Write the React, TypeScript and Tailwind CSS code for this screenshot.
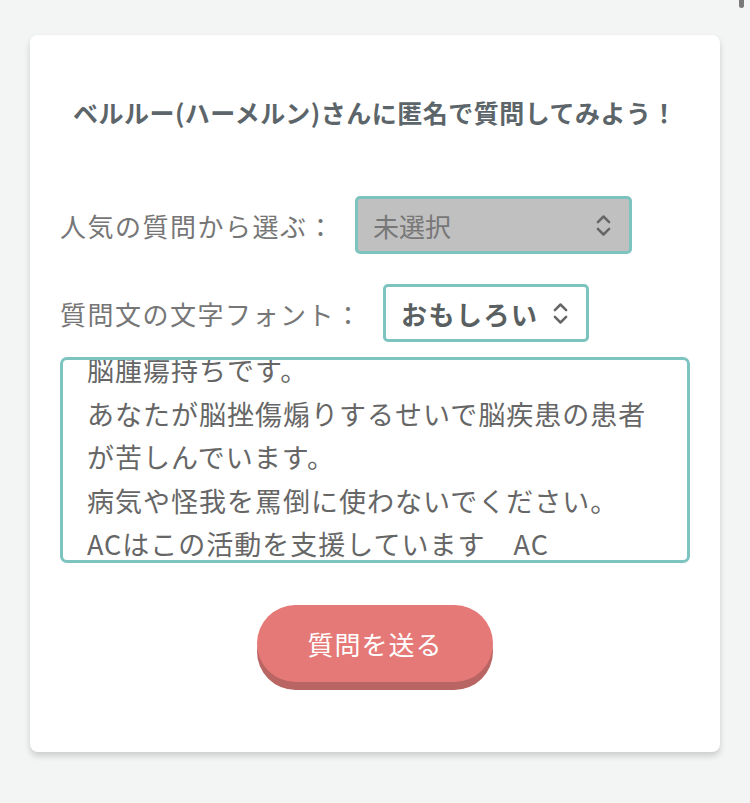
import { useEffect, useRef } from "react";
import { ChevronsUpDown } from "lucide-react";

const FONT = "font-['Noto_Sans_CJK_JP','Noto_Sans',sans-serif]";

const questionText =
  "脳腫瘍持ちです。\nあなたが脳挫傷煽りするせいで脳疾患の患者が苦しんでいます。\n病気や怪我を罵倒に使わないでください。\nACはこの活動を支援しています　AC";

export default function App() {
  const textRef = useRef<HTMLTextAreaElement>(null);

  useEffect(() => {
    if (textRef.current) textRef.current.scrollTop = 20;
  }, []);

  return (
    <div className={`relative min-h-[803px] w-full bg-[#f3f4f4] pt-[35px] ${FONT}`}>
      {/* scroll indicator peeking at the top right */}
      <div className="absolute right-[6px] top-0 h-[8px] w-[5px] rounded-b-full bg-[#7a7a7a]" />

      <div className="mx-[30px] rounded-[8px] bg-white px-[30px] pb-[70px] pt-[60px] shadow-[0_4px_6px_rgba(0,0,0,0.16)]">
        <h1 className="text-center text-[25px] font-bold leading-[34px] tracking-[0.5px] text-[#5c6569]">
          ベルルー(ハーメルン)さんに匿名で質問してみよう！
        </h1>

        <div className="mt-[67px] flex items-center">
          <span className="w-[295px] text-[26px] tracking-[1.5px] text-[#767676]">
            人気の質問から選ぶ：
          </span>
          <button className="flex h-[58px] w-[277px] items-center justify-between rounded-[5px] border-[3px] border-[#7dc3bf] bg-[#c0c0c0] pl-[15px] pr-[12px]">
            <span className="text-[26px] text-[#777]">未選択</span>
            <ChevronsUpDown className="h-[27px] w-[27px] text-[#666]" strokeWidth={2.2} />
          </button>
        </div>

        <div className="mt-[30px] flex items-center">
          <span className="w-[323px] text-[26px] tracking-[1.5px] text-[#767676]">
            質問文の文字フォント：
          </span>
          <button className="flex h-[58px] items-center gap-[8px] rounded-[5px] border-[3px] border-[#7dc3bf] bg-white pl-[15px] pr-[12px]">
            <span className="text-[26px] font-bold tracking-[1.5px] text-[#5a5f61]">おもしろい</span>
            <ChevronsUpDown className="h-[27px] w-[27px] text-[#666]" strokeWidth={2.2} />
          </button>
        </div>

        <textarea
          ref={textRef}
          readOnly
          defaultValue={questionText}
          className="mt-[15px] block h-[206px] w-full resize-none overflow-hidden rounded-[7px] border-[3px] border-[#7dc3bf] bg-white pb-[12px] pl-[24px] pr-[24px] pt-[8px] text-[27px] leading-[43.5px] tracking-[1px] text-[#666] outline-none"
        />

        <div className="mt-[42px] flex justify-center">
          <button className="h-[77px] w-[236px] rounded-full bg-[#e57977] text-[26px] tracking-[1px] text-white shadow-[0_8px_0_#b96563]">
            質問を送る
          </button>
        </div>
      </div>
    </div>
  );
}
